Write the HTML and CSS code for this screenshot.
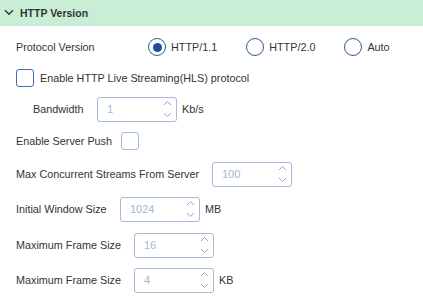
FILE: index.html
```html
<!DOCTYPE html>
<html lang="en">
<head>
  <meta charset="UTF-8">
  <title>HTTP Version</title>
  <link rel="stylesheet" href="styles.css">
</head>
<body>
  <div class="panel">
    <div class="panel-head">
      <svg class="chev" width="10" height="7" viewBox="0 0 10 7"><path d="M1 1.2 L5 5.2 L9 1.2" fill="none" stroke="#333" stroke-width="1.4"/></svg>
      <span>HTTP Version</span>
    </div>
    <div class="form">
      <div class="row r30">
        <label class="lbl w-proto">Protocol Version</label>
        <div class="radios">
          <div class="radio-item"><span class="radio on"></span>HTTP/1.1</div>
          <div class="radio-item"><span class="radio"></span>HTTP/2.0</div>
          <div class="radio-item"><span class="radio"></span>Auto</div>
        </div>
      </div>
      <div class="row r31">
        <span class="check"></span>
        <span class="check-text">Enable HTTP Live Streaming(HLS) protocol</span>
      </div>
      <div class="row r32 indent">
        <label class="lbl w-bw">Bandwidth</label>
        <div class="num"><input type="text" value="1" readonly><svg class="spin" width="9" height="20" viewBox="0 0 9 20"><path d="M1 6 L4.5 2.5 L8 6 M1 14 L4.5 17.5 L8 14" fill="none" stroke="#9aa6b4" stroke-width="1"/></svg></div>
        <span class="unit">Kb/s</span>
      </div>
      <div class="row r32">
        <label class="lbl w-push">Enable Server Push</label>
        <span class="check light"></span>
      </div>
      <div class="row r34">
        <label class="lbl w-max">Max Concurrent Streams From Server</label>
        <div class="num"><input type="text" value="100" readonly><svg class="spin" width="9" height="20" viewBox="0 0 9 20"><path d="M1 6 L4.5 2.5 L8 6 M1 14 L4.5 17.5 L8 14" fill="none" stroke="#9aa6b4" stroke-width="1"/></svg></div>
      </div>
      <div class="row r36">
        <label class="lbl w-win">Initial Window Size</label>
        <div class="num"><input type="text" value="1024" readonly><svg class="spin" width="9" height="20" viewBox="0 0 9 20"><path d="M1 6 L4.5 2.5 L8 6 M1 14 L4.5 17.5 L8 14" fill="none" stroke="#9aa6b4" stroke-width="1"/></svg></div>
        <span class="unit">MB</span>
      </div>
      <div class="row r36">
        <label class="lbl w-frame">Maximum Frame Size</label>
        <div class="num"><input type="text" value="16" readonly><svg class="spin" width="9" height="20" viewBox="0 0 9 20"><path d="M1 6 L4.5 2.5 L8 6 M1 14 L4.5 17.5 L8 14" fill="none" stroke="#9aa6b4" stroke-width="1"/></svg></div>
      </div>
      <div class="row r34">
        <label class="lbl w-frame">Maximum Frame Size</label>
        <div class="num"><input type="text" value="4" readonly><svg class="spin" width="9" height="20" viewBox="0 0 9 20"><path d="M1 6 L4.5 2.5 L8 6 M1 14 L4.5 17.5 L8 14" fill="none" stroke="#9aa6b4" stroke-width="1"/></svg></div>
        <span class="unit">KB</span>
      </div>
    </div>
  </div>
</body>
</html>
```
FILE: styles.css
```css
html, body {
  margin: 0;
  background: #fff;
  font-family: 'Liberation Sans', Arial, sans-serif;
  font-size: 10.8px;
  color: #333;
}
.panel-head {
  height: 26px;
  background: #c8eed6;
  display: flex;
  align-items: center;
  padding-left: 4px;
  font-weight: 700;
  font-size: 10.5px;
  color: #333;
}
.chev { margin-right: 6px; margin-top: -1px; }
.form {
  padding: 6px 0 0 16px;
}
.row {
  display: flex;
  align-items: center;
}
.r30 { height: 30px; }
.r31 { height: 31px; }
.r32 { height: 32px; }
.r34 { height: 34px; }
.r36 { height: 36px; }
.indent { padding-left: 17px; }
.lbl { flex: none; }
.w-proto { width: 132px; }
.w-bw    { width: 64px; }
.w-push  { width: 105px; }
.w-max   { width: 196px; }
.w-win   { width: 104px; }
.w-frame { width: 118px; }

.radios { display: flex; gap: 29px; }
.radio-item { display: flex; align-items: center; gap: 5px; }
.radio {
  width: 18px;
  height: 18px;
  box-sizing: border-box;
  border: 1.5px solid #2a5a98;
  border-radius: 50%;
  display: flex;
  align-items: center;
  justify-content: center;
}
.radio.on::after {
  content: "";
  width: 9px;
  height: 9px;
  border-radius: 50%;
  background: #1f4f8f;
}
.check {
  width: 18px;
  height: 18px;
  box-sizing: border-box;
  border: 1.5px solid #3d6db0;
  border-radius: 3px;
  background: #fff;
}
.check.light { border: 1px solid #9fbbe0; }
.check-text { margin-left: 6px; }

.num {
  width: 80px;
  height: 25px;
  box-sizing: border-box;
  border: 1px solid #a4bad8;
  border-radius: 3px;
  display: flex;
  align-items: center;
  padding-right: 4px;
}
.num input {
  flex: 1;
  min-width: 0;
  border: none;
  outline: none;
  background: transparent;
  padding: 0 0 0 9px;
  font: inherit;
  font-size: 11px;
  color: #a6b8d0;
}
.spin { flex: none; }
.unit { margin-left: 5px; }
```
